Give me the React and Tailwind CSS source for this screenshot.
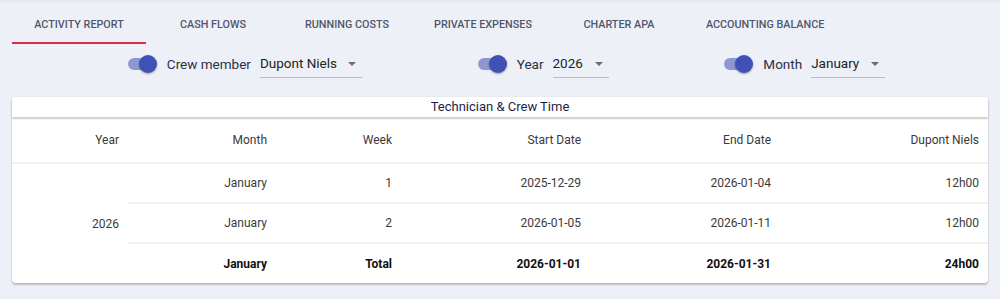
import React from "react";

const tabs = ["Activity Report", "Cash Flows", "Running Costs", "Private Expenses", "Charter APA", "Accounting Balance"];

function Toggle() {
  return (
    <div className="relative w-[30px] h-[20px] flex items-center">
      <div className="ml-[1px] w-[26px] h-[12px] rounded-full bg-[#8f97d3]" />
      <div className="absolute left-[12px] top-[1px] w-[18px] h-[18px] rounded-full bg-[#3f51b5] shadow-[0_1px_2px_rgba(0,0,0,0.35)]" />
    </div>
  );
}

function Select({ value, width }) {
  return (
    <div className={`relative flex items-center h-[28px] border-b border-[#b9bcc4] ${width}`}>
      <span className="text-[13.5px] text-[#222]">{value}</span>
      <svg className="absolute right-[6px] top-[12px]" width="8" height="4" viewBox="0 0 8 4">
        <path d="M0 0 L8 0 L4 4 Z" fill="#6b6b6b" />
      </svg>
    </div>
  );
}

function Filter({ label, value, width }) {
  return (
    <div className="flex items-center">
      <Toggle />
      <span className="ml-[10px] mr-[9px] text-[13.5px] text-[#2a2f45]">{label}</span>
      <Select value={value} width={width} />
    </div>
  );
}

export default function App() {
  const cell = "pr-[9px] text-right align-middle";
  return (
    <div className="w-[1000px] h-[299px] bg-[#edf1f7] overflow-hidden" style={{ fontFamily: "Roboto, 'Liberation Sans', sans-serif" }}>
      <div className="h-[4px] bg-gradient-to-b from-[#e1e5ec] to-[#edf1f7]" />
      <div className="flex pl-[12px] h-[40px]">
        {tabs.map((t, i) => (
          <div key={t} className="relative min-w-[134px] px-[20px] pt-[3px] flex items-center justify-center text-[10.8px] font-medium uppercase text-[#50566b]">
            {t}
            {i === 0 && <div className="absolute left-0 right-0 bottom-0 h-[2px] bg-[#e0294f]" />}
          </div>
        ))}
      </div>
      <div className="flex justify-evenly items-center pl-[12px] h-[40px]">
        <Filter label="Crew member" value="Dupont Niels" width="w-[102px]" />
        <Filter label="Year" value="2026" width="w-[56px]" />
        <Filter label="Month" value="January" width="w-[74px]" />
      </div>
      <div className="mx-[12px] mt-[13px] bg-white rounded-[4px] shadow-[0_2px_2px_rgba(0,0,0,0.22),0_0_2px_rgba(0,0,0,0.08)]">
        <div className="relative z-10 h-[20px] flex items-center justify-center rounded-t-[4px] bg-white shadow-[0_2px_2px_rgba(0,0,0,0.2)] text-[13px] text-[#1d1f4a]">
          Technician &amp; Crew Time
        </div>
        <table className="w-full table-fixed border-collapse text-[12px] text-[#3a3a3a]">
          <colgroup>
            <col className="w-[116px]" />
            <col className="w-[148px]" />
            <col className="w-[125px]" />
            <col className="w-[189px]" />
            <col className="w-[190px]" />
            <col className="w-[208px]" />
          </colgroup>
          <thead>
            <tr className="h-[46px] border-b-2 border-[#f0f0f0]">
              <th className={`${cell} font-normal`}>Year</th>
              <th className={`${cell} font-normal`}>Month</th>
              <th className={`${cell} font-normal`}>Week</th>
              <th className={`${cell} font-normal`}>Start Date</th>
              <th className={`${cell} font-normal`}>End Date</th>
              <th className={`${cell} font-normal`}>Dupont Niels</th>
            </tr>
          </thead>
          <tbody>
            <tr className="h-[40px] border-b-2 border-[#f0f0f0]">
              <td rowSpan={3} className={cell}>2026</td>
              <td className={cell}>January</td>
              <td className={cell}>1</td>
              <td className={cell}>2025-12-29</td>
              <td className={cell}>2026-01-04</td>
              <td className={cell}>12h00</td>
            </tr>
            <tr className="h-[40px] border-b-2 border-[#f0f0f0]">
              <td className={cell}>January</td>
              <td className={cell}>2</td>
              <td className={cell}>2026-01-05</td>
              <td className={cell}>2026-01-11</td>
              <td className={cell}>12h00</td>
            </tr>
            <tr className="h-[40px] font-bold text-[#111]">
              <td className={cell}>January</td>
              <td className={cell}>Total</td>
              <td className={cell}>2026-01-01</td>
              <td className={cell}>2026-01-31</td>
              <td className={cell}>24h00</td>
            </tr>
          </tbody>
        </table>
      </div>
    </div>
  );
}
